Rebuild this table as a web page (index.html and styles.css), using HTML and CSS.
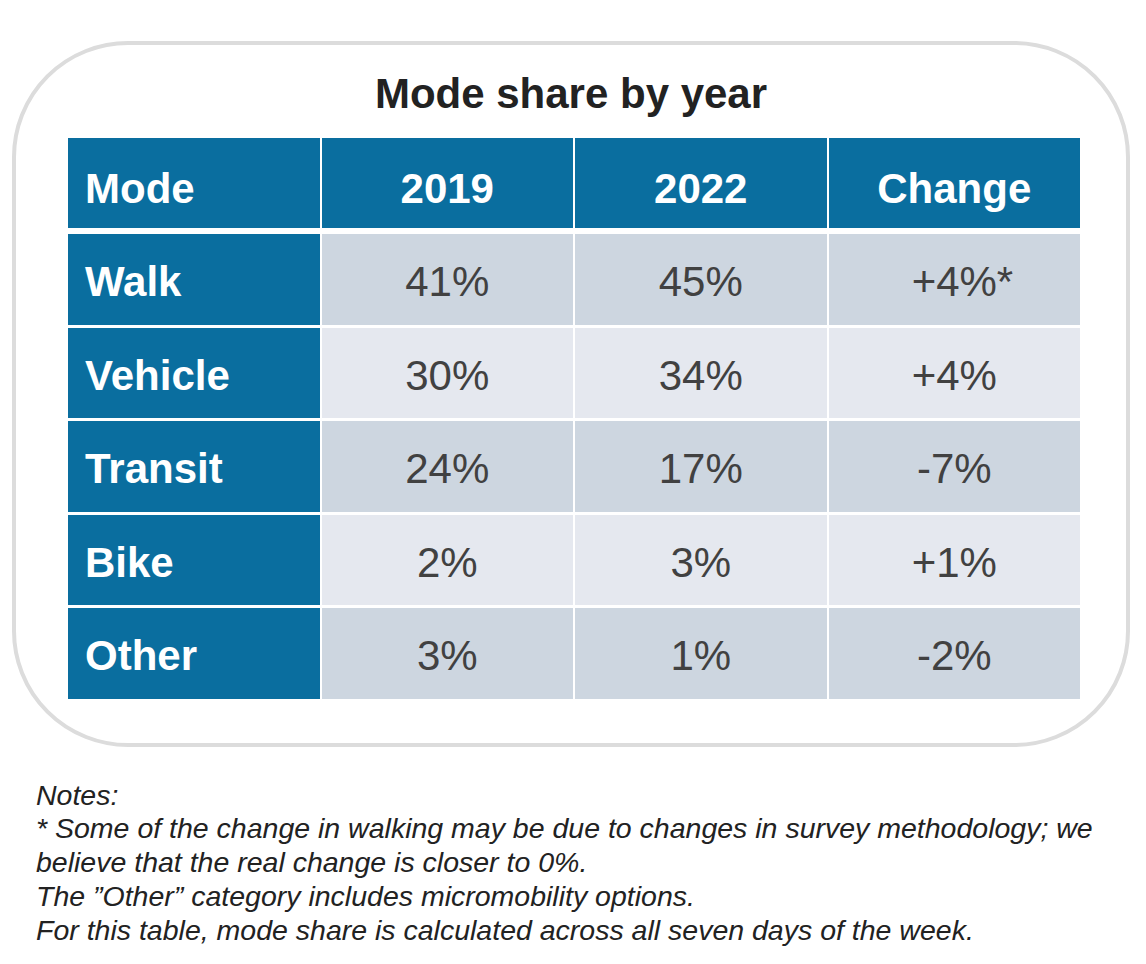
FILE: index.html
```html
<!DOCTYPE html>
<html lang="en">
<head>
<meta charset="utf-8">
<title>Mode share by year</title>
<link rel="stylesheet" href="styles.css">
</head>
<body>
<div class="card">
  <h1 class="title">Mode share by year</h1>
  <div class="table">
    <div class="cell head label">Mode</div>
    <div class="cell head">2019</div>
    <div class="cell head">2022</div>
    <div class="cell head">Change</div>

    <div class="cell label">Walk</div>
    <div class="cell dark">41%</div>
    <div class="cell dark">45%</div>
    <div class="cell dark"><span class="val">+4%<span class="star">*</span></span></div>

    <div class="cell label">Vehicle</div>
    <div class="cell light">30%</div>
    <div class="cell light">34%</div>
    <div class="cell light">+4%</div>

    <div class="cell label">Transit</div>
    <div class="cell dark">24%</div>
    <div class="cell dark">17%</div>
    <div class="cell dark">-7%</div>

    <div class="cell label">Bike</div>
    <div class="cell light">2%</div>
    <div class="cell light">3%</div>
    <div class="cell light">+1%</div>

    <div class="cell label">Other</div>
    <div class="cell dark">3%</div>
    <div class="cell dark">1%</div>
    <div class="cell dark">-2%</div>
  </div>
</div>
<div class="notes">
  <p>Notes:</p>
  <p>* Some of the change in walking may be due to changes in survey methodology; we believe that the real change is closer to 0%.</p>
  <p>The ”Other” category includes micromobility options.</p>
  <p>For this table, mode share is calculated across all seven days of the week.</p>
</div>
</body>
</html>
```

FILE: styles.css
```css
html, body {
  margin: 0;
  padding: 0;
  background: #ffffff;
}

body {
  font-family: "Liberation Sans", Arial, Helvetica, sans-serif;
}

.card {
  box-sizing: border-box;
  width: 1118px;
  margin: 41px 0 0 12px;
  border: 4px solid #dcdcdc;
  border-radius: 116px;
  background: #ffffff;
  padding: 24px 0 44px 0;
}

.title {
  margin: 0 0 19px 0;
  font-size: 42px;
  line-height: 50px;
  font-weight: 700;
  color: #222222;
  text-align: center;
}

.table {
  width: 1012px;
  margin-left: 52px;
  display: grid;
  grid-template-columns: repeat(4, 1fr);
  grid-template-rows: 93px repeat(5, 90.5px);
  column-gap: 2px;
  row-gap: 3px;
}

.cell {
  box-sizing: border-box;
  display: flex;
  align-items: center;
  justify-content: center;
  padding-top: 6px;
  font-size: 42px;
  color: #414141;
}

.head {
  background: #0a6e9f;
  color: #ffffff;
  font-weight: 700;
  margin-bottom: 3px;
  padding-top: 11px;
}

.label {
  justify-content: flex-start;
  padding-left: 17px;
  background: #0a6e9f;
  color: #ffffff;
  font-weight: 700;
}

.dark {
  background: #cdd6e0;
}

.light {
  background: #e5e8ef;
}

.val {
  position: relative;
}

.star {
  position: absolute;
  left: 100%;
  top: 0;
}

.notes {
  margin: 32px 0 0 36px;
  font-size: 28.5px;
  line-height: 33.75px;
  font-style: italic;
  color: #222222;
  width: 1090px;
}

.notes p {
  margin: 0;
}
```
